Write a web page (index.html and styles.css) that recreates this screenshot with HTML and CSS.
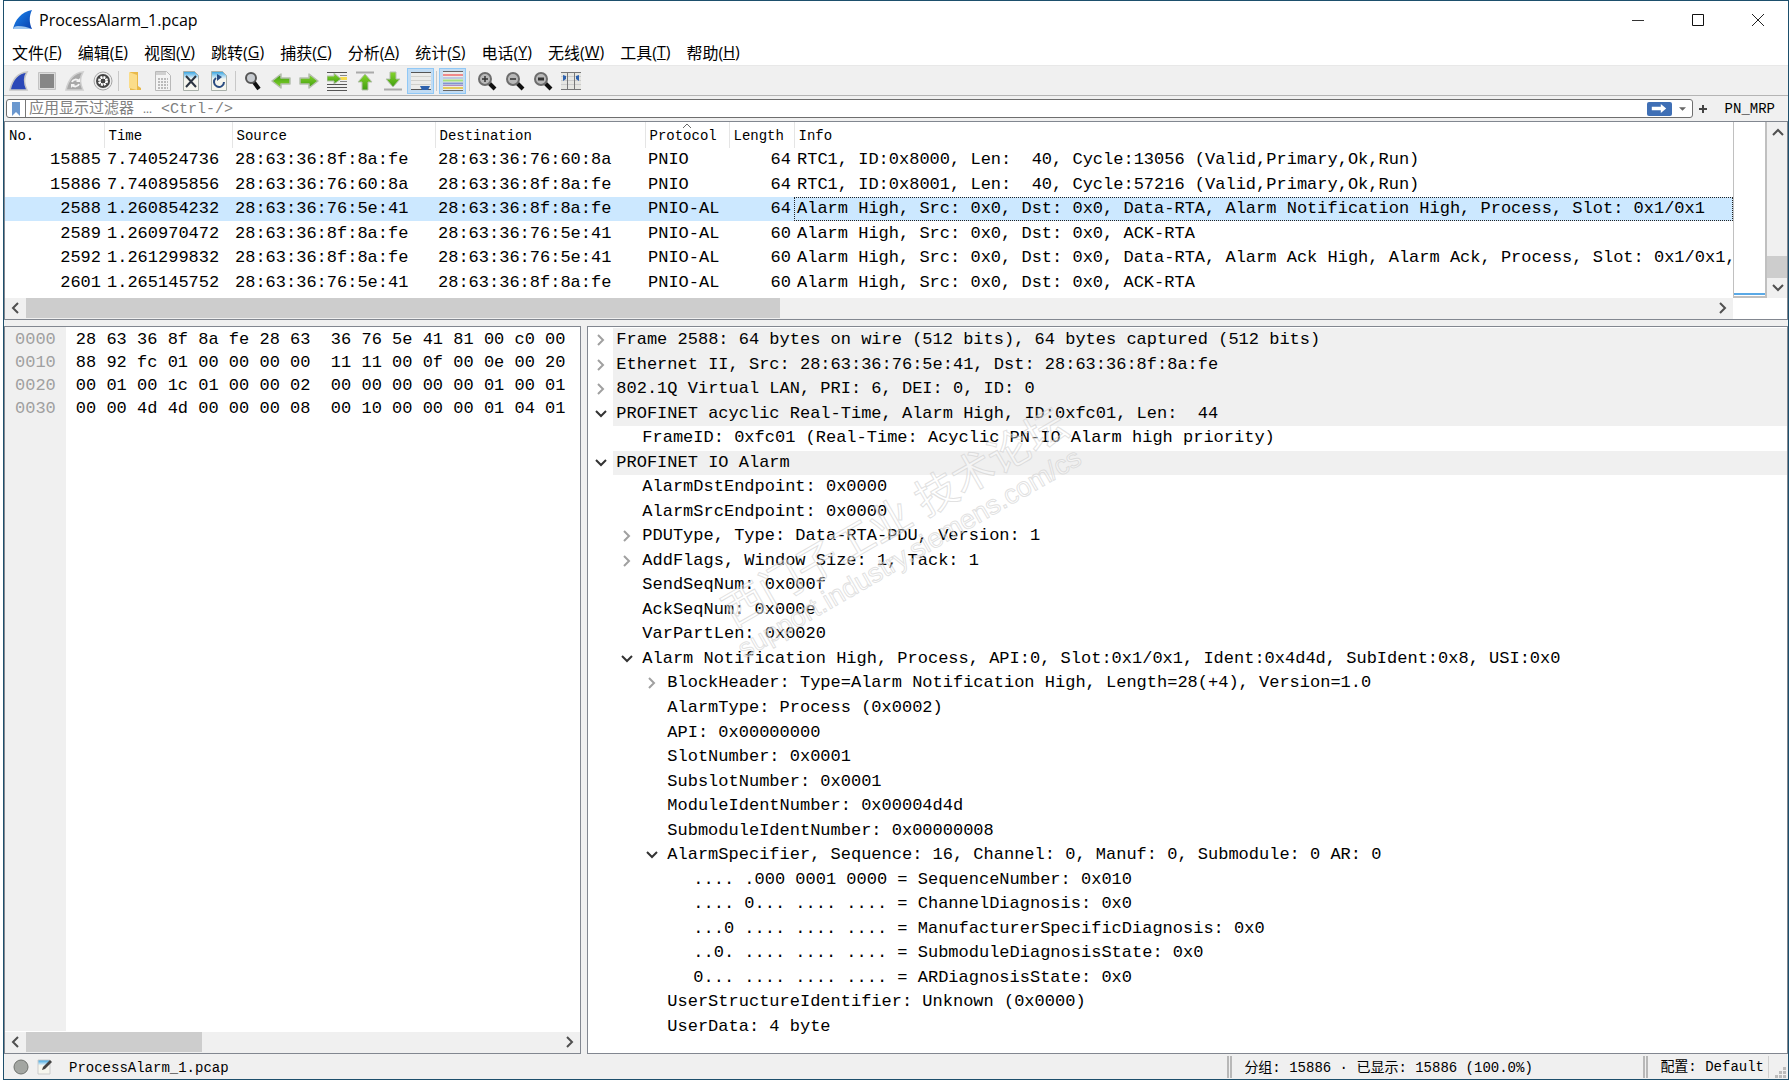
FILE: index.html
```html
<!DOCTYPE html>
<html lang="zh-CN">
<head>
    <meta charset="UTF-8">
    <meta name="viewport" content="width=device-width, initial-scale=1.0">
    <title>ProcessAlarm_1.pcap</title>
    <link rel="stylesheet" href="styles.css">
</head>
<body>
    <!-- shared shapes -->
    <svg class="defs" aria-hidden="true">
        <defs>
            <linearGradient id="fin-blue" x1="0" y1="0" x2="1" y2="1">
                <stop offset="0" stop-color="#1b8af0"/>
                <stop offset="1" stop-color="#0a3fae"/>
            </linearGradient>
            <linearGradient id="green" x1="0" y1="0" x2="0" y2="1">
                <stop offset="0" stop-color="#86d62c"/>
                <stop offset="1" stop-color="#3f9d10"/>
            </linearGradient>
            <linearGradient id="page" x1="0" y1="0" x2="0" y2="1">
                <stop offset="0" stop-color="#2fa0e0"/>
                <stop offset=".3" stop-color="#c9e6f5"/>
                <stop offset=".4" stop-color="#f6f6ee"/>
            </linearGradient>
        </defs>
        <symbol id="chev-right" viewBox="0 0 12 12"><path d="M3 1l5 5-5 5" fill="none" stroke="currentColor" stroke-width="2"/></symbol>
        <symbol id="chev-down" viewBox="0 0 12 12"><path d="M1 3l5 5 5-5" fill="none" stroke="currentColor" stroke-width="2"/></symbol>
        <symbol id="chev-left" viewBox="0 0 12 12"><path d="M8 1L3 6l5 5" fill="none" stroke="currentColor" stroke-width="2"/></symbol>
        <symbol id="chev-up" viewBox="0 0 12 12"><path d="M1 9l5-5 5 5" fill="none" stroke="currentColor" stroke-width="2"/></symbol>
        <symbol id="lens" viewBox="0 0 20 20">
            <path d="M12 12l6 6" stroke="#111" stroke-width="4"/>
            <circle cx="8" cy="8" r="6" fill="#b9b9b9" stroke="#6d6d6d" stroke-width="2"/>
        </symbol>
        <symbol id="arrow" viewBox="0 0 20 20">
            <path d="M1 7h9V3l9 7-9 7v-4H1z" fill="url(#green)" stroke="#b5bfae" stroke-width="1.5" stroke-linejoin="round"/>
        </symbol>
    </svg>

    <div class="window">
        <header class="titlebar">
            <svg class="app-icon" viewBox="0 0 20 20"><path d="M0 19C2 10 8 2 19 0c-3 6-3 13 0 19z" fill="url(#fin-blue)"/><path d="M0 19c1-2 2-3 5-3 5 0 9 1 14 3z" fill="#9cc4ee"/></svg>
            <span class="title">ProcessAlarm_1.pcap</span>
            <div class="window-buttons">
                <button aria-label="最小化"><svg viewBox="0 0 14 14"><path d="M1 7.5h12" stroke="#333"/></svg></button>
                <button aria-label="最大化"><svg viewBox="0 0 14 14"><path d="M1.500 1.500h11v11h-11z" stroke="#111" fill="none"/></svg></button>
                <button aria-label="关闭"><svg viewBox="0 0 14 14"><path d="M1 1l12 12M13 1L1 13" stroke="#222"/></svg></button>
            </div>
        </header>

        <nav class="menubar">
            <button>文件(<u>F</u>)</button>
            <button>编辑(<u>E</u>)</button>
            <button>视图(<u>V</u>)</button>
            <button>跳转(<u>G</u>)</button>
            <button>捕获(<u>C</u>)</button>
            <button>分析(<u>A</u>)</button>
            <button>统计(<u>S</u>)</button>
            <button>电话(<u>Y</u>)</button>
            <button>无线(<u>W</u>)</button>
            <button>工具(<u>T</u>)</button>
            <button>帮助(<u>H</u>)</button>
        </nav>

        <div class="toolbar">
            <button aria-label="开始捕获"><svg viewBox="0 0 20 20"><path d="M1 19C3 10 8 2 18 1c-3 5-3 12 0 18z" fill="#2b48b8" stroke="#c6c6c6" stroke-width="1.500"/></svg></button>
            <button aria-label="停止捕获"><svg viewBox="0 0 20 20"><path d="M1.500 1.500h17v17h-17z" fill="#ddd" stroke="#c4c4c4"/><path d="M3 3h14v14H3z" fill="#878787"/></svg></button>
            <button aria-label="重新开始捕获"><svg viewBox="0 0 20 20"><path d="M1 19C3 10 8 2 18 1c-3 5-3 12 0 18z" fill="#a8a8a8" stroke="#cfcfcf" stroke-width="1.500"/><path d="M7 11c1-3 5-3 7-1M14 13c-1 3-5 3-7 1" fill="none" stroke="#f4f4f4" stroke-width="2"/><path d="M15 7v4h-4zM6 17v-4h4z" fill="#f4f4f4"/></svg></button>
            <button aria-label="捕获选项"><svg viewBox="0 0 20 20"><circle cx="10" cy="10" r="9" fill="#eee" stroke="#a4a4a4"/><circle cx="10" cy="10" r="7" fill="#444"/><circle cx="10" cy="10" r="4" fill="none" stroke="#fff" stroke-width="2" stroke-dasharray="2 1.140"/><circle cx="10" cy="10" r="3" fill="#444" stroke="#fff"/></svg></button>
            <span class="tool-sep"></span>
            <button aria-label="打开"><svg viewBox="0 0 20 20"><path d="M5 1h8v14l3 2v2H5z" fill="#e9b94a"/><path d="M4 1l8 3v15l-8-2z" fill="#fbdd8a"/></svg></button>
            <button aria-label="保存"><svg viewBox="0 0 20 20"><path d="M2.500.5h11l4 4v15h-15z" fill="#f4f4f4" stroke="#b9b9b9"/><path d="M3 1h10v3H3z" fill="#d0d0d0"/><path d="M5 8h10M5 11h10M5 14h10M5 17h10" stroke="#bbb" stroke-width="2" stroke-dasharray="2 1"/></svg></button>
            <button aria-label="关闭文件"><svg viewBox="0 0 20 20"><path d="M2.500.5h11l4 4v15h-15z" fill="url(#page)" stroke="#a9b0aa"/><path d="M5 5l10 11M15 5L5 16" stroke="#2c3540" stroke-width="2"/></svg></button>
            <button aria-label="重新加载"><svg viewBox="0 0 20 20"><path d="M2.500.5h11l4 4v15h-15z" fill="url(#page)" stroke="#a9b0aa"/><path d="M7 7A5 5 0 1 0 15 11" fill="none" stroke="#294b80" stroke-width="2"/><path d="M8 3v7l5-4z" fill="#294b80"/></svg></button>
            <span class="tool-sep wide"></span>
            <button aria-label="查找"><svg viewBox="0 0 20 20"><path d="M10 10l6 8" stroke="#111" stroke-width="4"/><circle cx="8" cy="7" r="5" fill="#c7cbd0" stroke="#555" stroke-width="2"/></svg></button>
            <button aria-label="后退"><svg class="flip" viewBox="0 0 20 20"><use href="#arrow"/></svg></button>
            <button aria-label="前进"><svg viewBox="0 0 20 20"><use href="#arrow"/></svg></button>
            <button aria-label="转到分组"><svg viewBox="0 0 20 20"><path d="M0 1.500h20M0 13.500h20M0 16.500h20M0 19.500h20" stroke="#555"/><path d="M13 4.500h7M13 10.500h7" stroke="#888"/><path d="M13 6h7v3h-7z" fill="#f5dc50"/><path d="M0 5h7V2l7 6-7 5v-3H0z" fill="url(#green)" stroke="#b5bfae"/></svg></button>
            <button aria-label="首个分组"><svg viewBox="0 0 20 20"><path d="M1 1.500h18" stroke="#aaa" stroke-width="2"/><path d="M7 19v-8H3l7-8 7 8h-4v8z" fill="url(#green)" stroke="#b5bfae"/></svg></button>
            <button aria-label="最新分组"><svg viewBox="0 0 20 20"><path d="M1 18.500h18" stroke="#aaa" stroke-width="2"/><path d="M7 1v7H3l7 8 7-8h-4V1z" fill="url(#green)" stroke="#b5bfae"/></svg></button>
            <button class="on" aria-label="自动滚动"><svg viewBox="0 0 20 20"><path d="M0 1h20v18H0z" fill="#ececea"/><path d="M0 1.500h20M0 18.500h20" stroke="#555"/><path d="M0 5.500h20M0 9.500h20M0 13.500h20" stroke="#d0d0cc"/><path d="M9 15h10l-2 4h-6z" fill="#2e62ad"/></svg></button>
            <span class="tool-sep"></span>
            <button class="on" aria-label="着色"><svg viewBox="0 0 20 20"><path d="M0 1h20v18H0z" fill="#ececea"/><path d="M0 .5h20M0 19.500h20" stroke="#666"/><path d="M0 4h20" stroke="#f08a8a" stroke-width="2"/><path d="M0 7h20" stroke="#8fa5dc" stroke-width="1"/><path d="M0 9.500h20" stroke="#a4e080" stroke-width="2"/><path d="M0 12.500h20" stroke="#8094cf" stroke-width="2"/><path d="M0 14.500h20" stroke="#b08ac0"/><path d="M0 17h20" stroke="#e3c95c" stroke-width="2"/></svg></button>
            <span class="tool-sep wide"></span>
            <button aria-label="放大"><svg viewBox="0 0 20 20"><use href="#lens"/><path d="M5 8h6M8 5v6" stroke="#333" stroke-width="1.500"/></svg></button>
            <button aria-label="缩小"><svg viewBox="0 0 20 20"><use href="#lens"/><path d="M5 8h6" stroke="#333" stroke-width="1.500"/></svg></button>
            <button aria-label="原始大小"><svg viewBox="0 0 20 20"><use href="#lens"/><path d="M5 8h6" stroke="#333" stroke-width="3"/></svg></button>
            <button aria-label="调整列宽"><svg viewBox="0 0 20 20"><path d="M0 1h20v18H0z" fill="#e6e6e2"/><path d="M0 1.500h20M0 18.500h20" stroke="#777"/><path d="M0 5.500h20M0 9.500h20M0 13.500h20" stroke="#ccc"/><path d="M6.500 1v18M13.500 1v18" stroke="#777"/><path d="M2 4l3 1v3l-3 2zM18 4l-3 1v3l3 2z" fill="#2e62ad"/></svg></button>
        </div>

        <div class="filterbar">
            <div class="filter-box">
                <button class="bookmark" aria-label="书签"><svg viewBox="0 0 10 14"><path d="M1 0h8v14l-4-4-4 4z" fill="#6b98cf"/></svg></button>
                <input type="text" aria-label="显示过滤器" placeholder="应用显示过滤器 … &lt;Ctrl-/&gt;">
                <button class="apply" aria-label="应用"><svg viewBox="0 0 18 10"><path d="M1 3h10V0l6 5-6 5V7H1z" fill="#fff"/></svg></button>
                <button class="history" aria-label="历史"><svg viewBox="0 0 8 4"><path d="M0 0h8L4 4z" fill="#666"/></svg></button>
            </div>
            <button class="add" aria-label="添加"><svg viewBox="0 0 10 10"><path d="M1 5h8M5 1v8" stroke="#444" stroke-width="2"/></svg></button>
            <button class="saved">PN_MRP</button>
        </div>

        <section class="packets">
            <div class="packet-view">
                <table>
                    <colgroup>
                        <col class="c-no"><col class="c-time"><col class="c-src"><col class="c-dst"><col class="c-proto"><col class="c-len"><col>
                    </colgroup>
                    <thead>
                        <tr><th>No.</th><th>Time</th><th>Source</th><th>Destination</th><th class="sorted">Protocol<svg viewBox="0 0 10 5"><path d="M1 5l4-4 4 4" fill="none" stroke="#666"/></svg></th><th>Length</th><th>Info</th></tr>
                    </thead>
                    <tbody>
                        <tr><td>15885</td><td>7.740524736</td><td>28:63:36:8f:8a:fe</td><td>28:63:36:76:60:8a</td><td>PNIO</td><td>64</td><td>RTC1, ID:0x8000, Len:  40, Cycle:13056 (Valid,Primary,Ok,Run)</td></tr>
                        <tr><td>15886</td><td>7.740895856</td><td>28:63:36:76:60:8a</td><td>28:63:36:8f:8a:fe</td><td>PNIO</td><td>64</td><td>RTC1, ID:0x8001, Len:  40, Cycle:57216 (Valid,Primary,Ok,Run)</td></tr>
                        <tr class="selected"><td>2588</td><td>1.260854232</td><td>28:63:36:76:5e:41</td><td>28:63:36:8f:8a:fe</td><td>PNIO-AL</td><td>64</td><td>Alarm High, Src: 0x0, Dst: 0x0, Data-RTA, Alarm Notification High, Process, Slot: 0x1/0x1</td></tr>
                        <tr><td>2589</td><td>1.260970472</td><td>28:63:36:8f:8a:fe</td><td>28:63:36:76:5e:41</td><td>PNIO-AL</td><td>60</td><td>Alarm High, Src: 0x0, Dst: 0x0, ACK-RTA</td></tr>
                        <tr><td>2592</td><td>1.261299832</td><td>28:63:36:8f:8a:fe</td><td>28:63:36:76:5e:41</td><td>PNIO-AL</td><td>60</td><td>Alarm High, Src: 0x0, Dst: 0x0, Data-RTA, Alarm Ack High, Alarm Ack, Process, Slot: 0x1/0x1,</td></tr>
                        <tr><td>2601</td><td>1.265145752</td><td>28:63:36:76:5e:41</td><td>28:63:36:8f:8a:fe</td><td>PNIO-AL</td><td>60</td><td>Alarm High, Src: 0x0, Dst: 0x0, ACK-RTA</td></tr>
                    </tbody>
                </table>
            </div>
            <div class="minimap"></div>
            <div class="vscroll">
                <button aria-label="向上"><svg><use href="#chev-up"/></svg></button>
                <div class="thumb"></div>
                <button aria-label="向下"><svg><use href="#chev-down"/></svg></button>
            </div>
            <div class="hscroll">
                <button aria-label="向左"><svg><use href="#chev-left"/></svg></button>
                <div class="track"><div class="thumb wide"></div></div>
                <button aria-label="向右"><svg><use href="#chev-right"/></svg></button>
            </div>
        </section>

        <main class="panes">
            <section class="bytes">
                <div class="dump">
<pre class="offsets">0000
0010
0020
0030</pre>
<pre class="hex">28 63 36 8f 8a fe 28 63  36 76 5e 41 81 00 c0 00
88 92 fc 01 00 00 00 00  11 11 00 0f 00 0e 00 20
00 01 00 1c 01 00 00 02  00 00 00 00 00 01 00 01
00 00 4d 4d 00 00 00 08  00 10 00 00 00 01 04 01</pre>
                </div>
                <div class="hscroll">
                    <button aria-label="向左"><svg><use href="#chev-left"/></svg></button>
                    <div class="track"><div class="thumb short"></div></div>
                    <button aria-label="向右"><svg><use href="#chev-right"/></svg></button>
                </div>
            </section>

            <section class="details">
                <ul class="tree">
                    <li class="top"><button aria-label="展开"><svg><use href="#chev-right"/></svg></button><span>Frame 2588: 64 bytes on wire (512 bits), 64 bytes captured (512 bits)</span></li>
                    <li class="top"><button aria-label="展开"><svg><use href="#chev-right"/></svg></button><span>Ethernet II, Src: 28:63:36:76:5e:41, Dst: 28:63:36:8f:8a:fe</span></li>
                    <li class="top"><button aria-label="展开"><svg><use href="#chev-right"/></svg></button><span>802.1Q Virtual LAN, PRI: 6, DEI: 0, ID: 0</span></li>
                    <li class="top"><button class="open" aria-label="折叠"><svg><use href="#chev-down"/></svg></button><span>PROFINET acyclic Real-Time, Alarm High, ID:0xfc01, Len:  44</span></li>
                    <li class="l1 leaf"><span>FrameID: 0xfc01 (Real-Time: Acyclic PN-IO Alarm high priority)</span></li>
                    <li class="top"><button class="open" aria-label="折叠"><svg><use href="#chev-down"/></svg></button><span>PROFINET IO Alarm</span></li>
                    <li class="l1 leaf"><span>AlarmDstEndpoint: 0x0000</span></li>
                    <li class="l1 leaf"><span>AlarmSrcEndpoint: 0x0000</span></li>
                    <li class="l1"><button aria-label="展开"><svg><use href="#chev-right"/></svg></button><span>PDUType, Type: Data-RTA-PDU, Version: 1</span></li>
                    <li class="l1"><button aria-label="展开"><svg><use href="#chev-right"/></svg></button><span>AddFlags, Window Size: 1, Tack: 1</span></li>
                    <li class="l1 leaf"><span>SendSeqNum: 0x000f</span></li>
                    <li class="l1 leaf"><span>AckSeqNum: 0x000e</span></li>
                    <li class="l1 leaf"><span>VarPartLen: 0x0020</span></li>
                    <li class="l1"><button class="open" aria-label="折叠"><svg><use href="#chev-down"/></svg></button><span>Alarm Notification High, Process, API:0, Slot:0x1/0x1, Ident:0x4d4d, SubIdent:0x8, USI:0x0</span></li>
                    <li class="l2"><button aria-label="展开"><svg><use href="#chev-right"/></svg></button><span>BlockHeader: Type=Alarm Notification High, Length=28(+4), Version=1.0</span></li>
                    <li class="l2 leaf"><span>AlarmType: Process (0x0002)</span></li>
                    <li class="l2 leaf"><span>API: 0x00000000</span></li>
                    <li class="l2 leaf"><span>SlotNumber: 0x0001</span></li>
                    <li class="l2 leaf"><span>SubslotNumber: 0x0001</span></li>
                    <li class="l2 leaf"><span>ModuleIdentNumber: 0x00004d4d</span></li>
                    <li class="l2 leaf"><span>SubmoduleIdentNumber: 0x00000008</span></li>
                    <li class="l2"><button class="open" aria-label="折叠"><svg><use href="#chev-down"/></svg></button><span>AlarmSpecifier, Sequence: 16, Channel: 0, Manuf: 0, Submodule: 0 AR: 0</span></li>
                    <li class="l3 leaf"><span>.... .000 0001 0000 = SequenceNumber: 0x010</span></li>
                    <li class="l3 leaf"><span>.... 0... .... .... = ChannelDiagnosis: 0x0</span></li>
                    <li class="l3 leaf"><span>...0 .... .... .... = ManufacturerSpecificDiagnosis: 0x0</span></li>
                    <li class="l3 leaf"><span>..0. .... .... .... = SubmoduleDiagnosisState: 0x0</span></li>
                    <li class="l3 leaf"><span>0... .... .... .... = ARDiagnosisState: 0x0</span></li>
                    <li class="l2 leaf"><span>UserStructureIdentifier: Unknown (0x0000)</span></li>
                    <li class="l2 leaf"><span>UserData: 4 byte</span></li>
                </ul>
                <div class="watermark">
                    <div class="mark-name">西门子工业 技术论坛</div>
                    <div class="mark-url">support.industry.siemens.com/cs</div>
                </div>
            </section>
        </main>

        <footer class="statusbar">
            <button aria-label="专家信息"><svg viewBox="0 0 16 16"><circle cx="8" cy="8" r="7" fill="#a3a6a2" stroke="#6f726e"/></svg></button>
            <button aria-label="捕获文件注释"><svg viewBox="0 0 16 16"><path d="M1 1h12v14H1z" fill="url(#page)" stroke="#ccc"/><path d="M5 11l1-3 7-7 2 2-7 7z" fill="#444"/></svg></button>
            <span class="file">ProcessAlarm_1.pcap</span>
            <span class="counts">分组: 15886 · 已显示: 15886 (100.0%)</span>
            <button class="profile">配置: Default</button>
            <svg class="grip" viewBox="0 0 12 12"><path d="M8 0h3v3H8zM4 4h3v3H4zM8 4h3v3H8zM0 8h3v3H0zM4 8h3v3H4zM8 8h3v3H8z" fill="#bbb"/></svg>
        </footer>
    </div>
</body>
</html>
```

FILE: styles.css
```css
* {
    box-sizing: border-box;
}

body {
    margin: 0;
    padding: 0 2px 0 3px;
    background: #fff;
    color: #000;
    font-family: "Liberation Mono", "Noto Sans CJK SC", monospace;
    font-size: 14px;
}

button {
    display: flex;
    align-items: center;
    justify-content: center;
    padding: 0;
    border: none;
    background: none;
    color: inherit;
    font: inherit;
}

.defs {
    position: absolute;
    width: 0;
    height: 0;
}

.window {
    display: flex;
    flex-direction: column;
    min-height: 100vh;
    border: 1px solid #1d4f6c;
    background: #f0f0f0;
}

/* title and menu */
.titlebar {
    display: flex;
    align-items: center;
    height: 37px;
    padding-left: 9px;
    background: #fff;
    font-family: "Open Sans", sans-serif;
    font-size: 16px;
}

.app-icon {
    width: 20px;
    height: 20px;
    margin-right: 6px;
}

.window-buttons {
    display: flex;
    margin-left: auto;
}

.window-buttons button {
    width: 60px;
    height: 36px;
}

.window-buttons svg {
    width: 14px;
    height: 14px;
}

.menubar {
    display: flex;
    gap: 16px;
    height: 28px;
    padding-left: 8px;
    border-bottom: 1px solid #e8e8e8;
    background: #fff;
    font-family: "Open Sans", "Noto Sans CJK SC", sans-serif;
    font-size: 16px;
}

/* toolbar */
.toolbar {
    display: flex;
    align-items: center;
    gap: 1px;
    height: 30px;
    padding-left: 1px;
    border-bottom: 1px solid #b4b4b4;
}

.toolbar button {
    width: 27px;
    height: 26px;
}

.toolbar svg {
    width: 20px;
    height: 20px;
}

.toolbar .on {
    border: 1px solid #90c8f6;
    background: #c2dcf3;
}

.flip {
    transform: rotate(180deg);
}

.tool-sep {
    width: 1px;
    height: 20px;
    margin: 0 1px;
    background: #c8c8c8;
}

.tool-sep.wide {
    margin: 0 2px;
}

/* display filter */
.filterbar {
    display: flex;
    align-items: center;
    height: 25px;
    padding: 0 13px 0 2px;
}

.filter-box {
    display: flex;
    align-items: center;
    flex: 1;
    height: 19px;
    border: 1px solid #6e6e6e;
    border-radius: 3px;
    background: #fff;
}

.bookmark {
    width: 19px;
    height: 17px;
    border-right: 1px solid #777;
}

.bookmark svg {
    width: 10px;
    height: 14px;
}

.filter-box input {
    flex: 1;
    min-width: 0;
    height: 17px;
    padding: 1px 3px 0;
    border: none;
    outline: none;
    background: none;
    font: inherit;
    font-size: 15px;
}

.filter-box input::placeholder {
    color: #808080;
}

.apply {
    width: 25px;
    height: 14px;
    border-radius: 2px;
    background: #3f6fb5;
}

.apply svg {
    width: 18px;
    height: 9px;
}

.history {
    width: 19px;
    margin-left: 1px;
}

.history svg {
    width: 7px;
    height: 4px;
}

.add {
    width: 21px;
    margin-right: 11px;
}

.add svg {
    width: 10px;
    height: 10px;
}

/* packet list */
.packets {
    display: grid;
    grid-template-columns: minmax(0, 1fr) 34px 20px;
    border: 1px solid #828790;
    background: #fff;
}

.packet-view {
    height: 176px;
    overflow: hidden;
}

table {
    width: 100%;
    border-collapse: collapse;
    table-layout: fixed;
    font-size: 17px;
    line-height: 24px;
}

.c-no {
    width: 99px;
}

.c-time {
    width: 128px;
}

.c-src {
    width: 203px;
}

.c-dst {
    width: 210px;
}

.c-proto {
    width: 84px;
}

.c-len {
    width: 65px;
}

th {
    height: 26px;
    padding: 2px 4px 0;
    border-right: 1px solid #e5e5e5;
    font-size: 14px;
    font-weight: normal;
    text-align: left;
}

th:last-child {
    border-right: none;
}

.sorted {
    position: relative;
}

.sorted svg {
    position: absolute;
    top: 1px;
    left: calc(50% - 5px);
    width: 10px;
    height: 5px;
}

td {
    height: 24px;
    padding: 0 3px;
    overflow: hidden;
    white-space: pre;
}

td:last-child {
    padding-right: 0;
    overflow: visible;
}

tbody tr:nth-child(even) td {
    height: 25px;
}

td:nth-child(1),
td:nth-child(6) {
    text-align: right;
}

.selected {
    background: #cce8ff;
}

.selected td:last-child {
    outline: 1px dotted #222;
    outline-offset: -1px;
}

.minimap {
    height: 176px;
    border: solid #c0c0c0;
    border-width: 0 2px 2px 1px;
    background: linear-gradient(#5aa9e6, #5aa9e6) 0 171px / 100% 2px no-repeat #fff;
}

.vscroll {
    display: flex;
    flex-direction: column;
    background: #f0f0f0;
}

.vscroll button,
.hscroll button {
    flex: none;
    width: 21px;
    height: 20px;
    color: #505050;
}

.vscroll svg,
.hscroll svg {
    width: 12px;
    height: 12px;
}

.vscroll .thumb {
    height: 22px;
    margin-top: auto;
    background: #cdcdcd;
}

.hscroll {
    display: flex;
    height: 21px;
    background: #f0f0f0;
}

.track {
    flex: 1;
}

.track .thumb {
    height: 20px;
    background: #cdcdcd;
}

.thumb.wide {
    width: 44.7%;
}

.thumb.short {
    width: 33%;
}

/* lower panes */
.panes {
    display: grid;
    grid-template-columns: minmax(0, 577fr) minmax(0, 1200fr);
    gap: 6px;
    flex: 1;
    padding-top: 6px;
}

.bytes,
.details {
    border: 1px solid #828790;
    background: #fff;
}

.bytes {
    display: flex;
    flex-direction: column;
}

.dump {
    display: flex;
    flex: 1;
}

pre {
    margin: 0;
    padding: 1px 10px;
    font-family: inherit;
    font-size: 17px;
    line-height: 23px;
}

.offsets {
    margin-bottom: 1px;
    background: #f0f0f0;
    color: #a0a0a0;
}

.details {
    position: relative;
    overflow: hidden;
}

.tree {
    display: grid;
    grid-auto-rows: 1fr;
    height: 100%;
    margin: 0;
    padding: 1px 0 14px;
    list-style: none;
    font-size: 17px;
    line-height: 22px;
    white-space: pre;
}

.tree li {
    display: flex;
    align-items: stretch;
}

.tree button {
    width: 25px;
    color: #a0a0a0;
}

.tree .open {
    color: #333;
}

.tree svg {
    width: 12px;
    height: 12px;
}

.tree span {
    display: flex;
    align-items: center;
    flex: 1;
    padding-left: 3px;
}

.top span {
    background: #f0f0f0;
}

.leaf span {
    padding-left: 28px;
}

.l1 {
    padding-left: 26px;
}

.l2 {
    padding-left: 51px;
}

.l3 {
    padding-left: 77px;
}

.watermark {
    position: absolute;
    top: 168px;
    left: 114px;
    color: rgba(255, 255, 255, 0.4);
    font-family: "Liberation Sans", "Noto Sans CJK SC", sans-serif;
    white-space: nowrap;
    transform: rotate(-30deg);
    pointer-events: none;
    -webkit-text-stroke: 1px rgba(205, 205, 205, 0.6);
}

.mark-name {
    padding-left: 6px;
    font-size: 42px;
    line-height: 46px;
}

.mark-url {
    font-size: 27px;
    line-height: 28px;
}

/* status bar */
.statusbar {
    display: flex;
    align-items: center;
    height: 25px;
    padding: 0 1px 0 9px;
}

.statusbar button svg {
    width: 16px;
    height: 16px;
    margin-right: 8px;
}

.file {
    flex: 1;
    padding: 3px 0 0 8px;
}

.counts,
.profile {
    height: 22px;
    padding-left: 12px;
    border-left: 5px double #b8b8b8;
    line-height: 24px;
}

.counts {
    width: 416px;
}

.statusbar .profile {
    justify-content: flex-start;
    padding-right: 4px;
    border-right: 1px solid #d0d0d0;
}

.grip {
    align-self: flex-end;
    width: 12px;
    height: 12px;
    margin-left: 6px;
}
```
